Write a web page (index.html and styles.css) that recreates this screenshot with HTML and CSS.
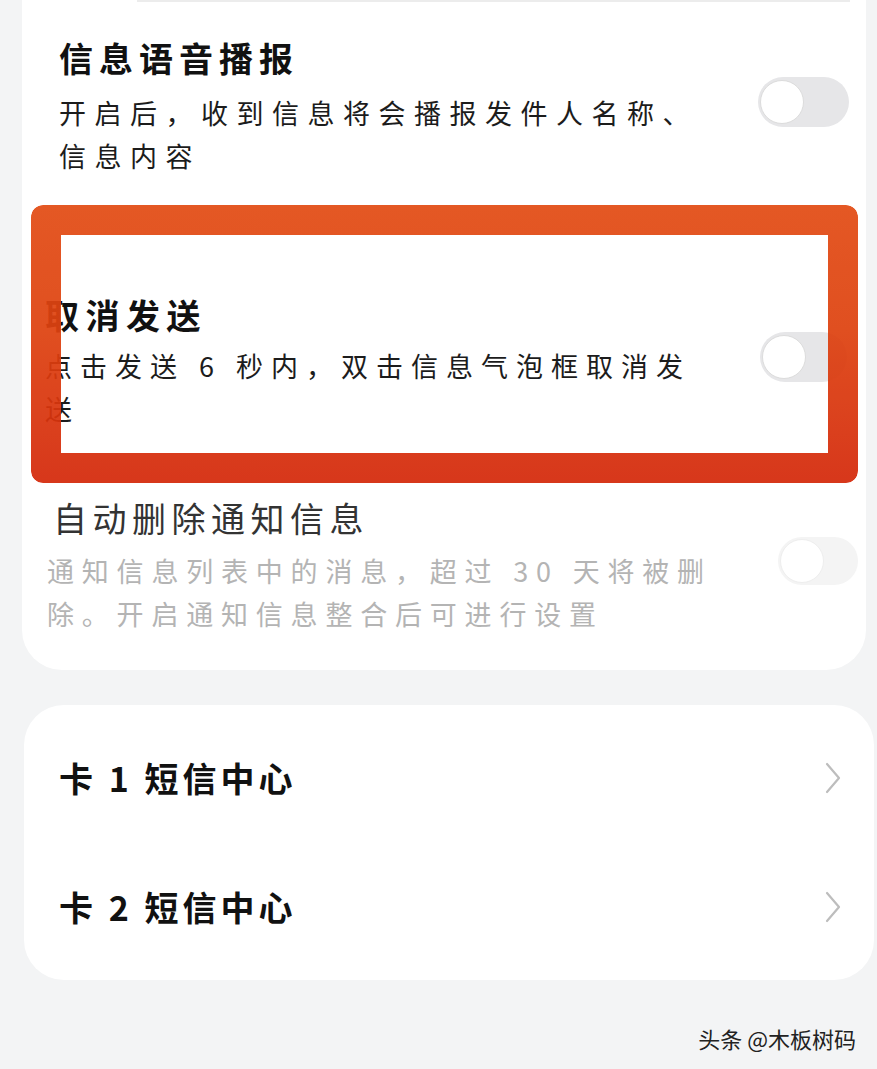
FILE: index.html
```html
<!DOCTYPE html>
<html lang="zh-CN">
<head>
<meta charset="utf-8">
<title>信息设置</title>
<link rel="stylesheet" href="styles.css">
</head>
<body>
<div class="page">
  <section class="card card-main">
    <div class="top-line"></div>

    <div class="row row-voice">
      <div class="text">
        <div class="title">信息语音播报</div>
        <div class="sub">
          <span class="line">开启后，收到信息将会播报发件人名称、</span>
          <span class="line">信息内容</span>
        </div>
      </div>
      <div class="toggle"><span class="knob"></span></div>
    </div>

    <div class="row row-cancel">
      <div class="text">
        <div class="title">取消发送</div>
        <div class="sub">
          <span class="line">点击发送 6 秒内，双击信息气泡框取消发</span>
          <span class="line">送</span>
        </div>
      </div>
      <div class="toggle"><span class="knob"></span></div>
    </div>

    <div class="row row-delete">
      <div class="text">
        <div class="title">自动删除通知信息</div>
        <div class="sub">
          <span class="line">通知信息列表中的消息，超过 30 天将被删</span>
          <span class="line">除。开启通知信息整合后可进行设置</span>
        </div>
      </div>
      <div class="toggle toggle-faint"><span class="knob"></span></div>
    </div>

    <div class="highlight"></div>
  </section>

  <section class="card card-sms">
    <div class="nav-row">
      <span class="nav-title">卡 1 短信中心</span>
      <svg class="chev" viewBox="0 0 18 32" width="18" height="32"><path d="M3 2 L15 16 L3 30" fill="none" stroke="#bdbdbd" stroke-width="2.2" stroke-linecap="round" stroke-linejoin="round"/></svg>
    </div>
    <div class="nav-row">
      <span class="nav-title">卡 2 短信中心</span>
      <svg class="chev" viewBox="0 0 18 32" width="18" height="32"><path d="M3 2 L15 16 L3 30" fill="none" stroke="#bdbdbd" stroke-width="2.2" stroke-linecap="round" stroke-linejoin="round"/></svg>
    </div>
  </section>

  <div class="watermark">头条 @木板树码</div>
</div>
</body>
</html>
```

FILE: styles.css
```css
* { box-sizing: border-box; }

html, body {
  margin: 0;
  padding: 0;
  background: #f3f4f5;
}

body {
  font-family: "Noto Sans CJK SC", "Noto Sans", sans-serif;
  color: #111;
  width: 877px;
  height: 1069px;
  overflow: hidden;
}

.page {
  display: flex;
  flex-direction: column;
}

.card {
  background: #fff;
}

.card-main {
  position: relative;
  margin: 0 11px 0 22px;
  border-radius: 0 0 40px 40px;
  padding-bottom: 35px;
}

.top-line {
  height: 2px;
  margin: 0 16px 0 115px;
  background: #ececec;
}

.row {
  display: flex;
  align-items: flex-start;
}

.text {
  display: flex;
  flex-direction: column;
}

.title {
  font-size: 34px;
  line-height: 44px;
  font-weight: 700;
  letter-spacing: 6px;
  color: #111;
  white-space: nowrap;
}

.sub {
  display: flex;
  flex-direction: column;
  font-size: 27px;
  line-height: 43px;
  letter-spacing: 8.5px;
  color: #1c1c1c;
}

.line { white-space: nowrap; }

.row-voice {
  padding: 34px 0 0 37px;
}
.row-voice .sub { margin-top: 11px; }
.row-voice .toggle { margin: 41px 17px 0 auto; }

.row-cancel {
  padding: 116px 0 0 23px;
}
.row-cancel .title { letter-spacing: 6.5px; }
.row-cancel .sub { margin-top: 7px; letter-spacing: 8px; }
.row-cancel .toggle { margin: 39px 19px 0 auto; width: 87px; }

.row-delete {
  padding: 66px 0 0 31px;
}
.row-delete .title {
  font-weight: 400;
  color: #333;
  letter-spacing: 5.5px;
}
.row-delete .sub {
  margin-top: 9px;
  margin-left: -6px;
  color: #b4b4b4;
  letter-spacing: 7.8px;
}
.row-delete .toggle { margin: 41px 8px 0 auto; }

.toggle {
  flex: none;
  position: relative;
  width: 91px;
  height: 50px;
  border-radius: 25px;
  background: #e6e6e8;
}

.knob {
  position: absolute;
  left: 2px;
  top: 3px;
  width: 44px;
  height: 44px;
  border-radius: 50%;
  background: #fff;
  border: 1.5px solid #dcdcdc;
}

.toggle-faint {
  width: 80px;
  height: 48px;
  background: #f4f4f4;
}
.toggle-faint .knob {
  top: 2px;
  border-color: #eeeeee;
}

.highlight {
  position: absolute;
  left: 9px;
  top: 205px;
  width: 827px;
  height: 278px;
  padding: 30px;
  border-radius: 12px;
  background: linear-gradient(180deg, #e24c14 0%, #de4210 45%, #d5290a 100%);
  opacity: 0.93;
  -webkit-mask: linear-gradient(#000 0 0) content-box, linear-gradient(#000 0 0);
  -webkit-mask-composite: xor;
  mask-composite: exclude;
  pointer-events: none;
}

.card-sms {
  margin: 35px 3px 0 24px;
  border-radius: 40px;
  padding: 8px 0 9px;
  display: flex;
  flex-direction: column;
}

.nav-row {
  height: 129px;
  display: flex;
  align-items: center;
  padding: 0 32px 0 35px;
}

.nav-title {
  font-size: 34px;
  font-weight: 700;
  letter-spacing: 4px;
  color: #111;
}

.chev {
  margin-left: auto;
  flex: none;
}

.watermark {
  margin-top: 43px;
  align-self: flex-end;
  padding-right: 21px;
  font-size: 22px;
  line-height: 30px;
  color: #222;
}
```
